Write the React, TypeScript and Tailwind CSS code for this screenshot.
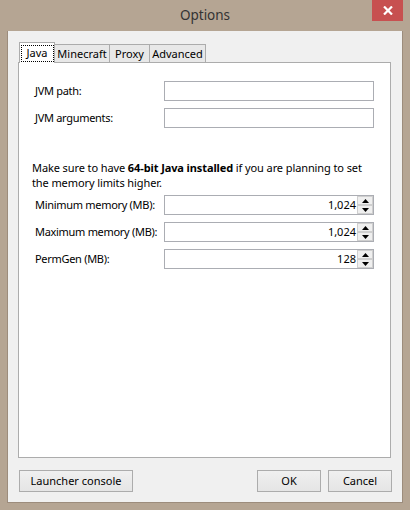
import React from "react";

function Field({ label }: { label: string }) {
  return (
    <div className="grid grid-cols-[129px_210px] items-center h-[20px]">
      <div className="leading-[14px] whitespace-nowrap tracking-[-0.3px]">{label}</div>
      <div className="h-[20px] border border-[#abadb3] bg-white" />
    </div>
  );
}

function Spinner() {
  return (
    <div className="flex flex-col w-[16px] h-[18px]">
      <div className="h-[9px] border border-[#cfcfcf] bg-[#efefef] flex items-center justify-center">
        <svg width="7" height="4" viewBox="0 0 7 4">
          <path d="M3.5 0 L7 4 L0 4 Z" fill="#000" />
        </svg>
      </div>
      <div className="h-[9px] border border-[#cfcfcf] bg-[#efefef] flex items-center justify-center">
        <svg width="7" height="4" viewBox="0 0 7 4">
          <path d="M0 0 L7 0 L3.5 4 Z" fill="#000" />
        </svg>
      </div>
    </div>
  );
}

function NumField({ label, value }: { label: string; value: string }) {
  return (
    <div className="grid grid-cols-[129px_210px] items-center h-[20px]">
      <div className="leading-[14px] whitespace-nowrap tracking-[-0.3px]">{label}</div>
      <div className="h-[20px] border border-[#abadb3] bg-white flex items-center">
        <div className="flex-1 text-right pr-[1px] leading-[14px]">{value}</div>
        <Spinner />
      </div>
    </div>
  );
}

export default function App() {
  return (
    <div className="w-[410px] h-[510px] bg-[#b5a593] flex flex-col relative font-['Noto_Sans',sans-serif] text-[11px] text-black">
      <div className="h-[31px] flex items-center justify-center text-[13.5px] text-[#333333]">
        Options
      </div>
      <div className="absolute top-0 right-[7px] w-[31px] h-[21px] bg-[#c75050] flex items-center justify-center">
        <svg width="10" height="9" viewBox="0 0 10 9">
          <path d="M1 0.5 L9 8.5 M9 0.5 L1 8.5" stroke="#fff" strokeWidth="2.2" />
        </svg>
      </div>
      <div className="ml-[7px] w-[396px] h-[472px] border border-t-0 border-[#9c8c7c] bg-[#f0f0f0] flex flex-col px-[10px]">
        <div className="mt-[11px] h-[20px] flex items-end ml-[1px]">
          <div className="relative z-10 -mb-px h-[21px] w-[36px] border-x border-t border-[#acacac] bg-white flex items-center justify-center">
            <div className="h-[17px] w-[33px] border border-dotted border-black flex items-center justify-center leading-[14px]">
              Java
            </div>
          </div>
          <div className="-ml-px h-[18px] w-[56px] border-x border-t border-[#acacac] bg-[#e8e8e8] flex items-center justify-center leading-[14px]">
            Minecraft
          </div>
          <div className="-ml-px h-[18px] w-[41px] border-x border-t border-[#acacac] bg-[#e8e8e8] flex items-center justify-center leading-[14px]">
            Proxy
          </div>
          <div className="-ml-px h-[18px] w-[57px] border-x border-t border-[#acacac] bg-[#e8e8e8] flex items-center justify-center leading-[14px]">
            Advanced
          </div>
        </div>
        <div className="w-[373px] h-[396px] border border-[#acacac] bg-white flex flex-col">
          <div className="pl-[16px] pt-[18px] flex flex-col gap-[7px]">
            <Field label="JVM path:" />
            <Field label="JVM arguments:" />
          </div>
          <div className="mt-[32px] pl-[13px] leading-[15px] whitespace-nowrap tracking-[-0.1px]">
            Make sure to have <span className="font-bold">64-bit Java installed</span> if you are planning to set
            <br />
            the memory limits higher.
          </div>
          <div className="mt-[5px] pl-[16px] flex flex-col gap-[7px]">
            <NumField label="Minimum memory (MB):" value="1,024" />
            <NumField label="Maximum memory (MB):" value="1,024" />
            <NumField label="PermGen (MB):" value="128" />
          </div>
        </div>
        <div className="mt-[12px] flex items-center h-[22px]">
          <button className="ml-[1px] w-[114px] h-[22px] border border-[#acacac] bg-gradient-to-b from-[#f0f0f0] to-[#e5e5e5] leading-[14px]">
            Launcher console
          </button>
          <div className="flex-1" />
          <button className="w-[64px] h-[22px] border border-[#acacac] bg-gradient-to-b from-[#f0f0f0] to-[#e5e5e5] leading-[14px]">
            OK
          </button>
          <button className="ml-[7px] w-[64px] h-[22px] border border-[#acacac] bg-gradient-to-b from-[#f0f0f0] to-[#e5e5e5] leading-[14px]">
            Cancel
          </button>
        </div>
      </div>
    </div>
  );
}
